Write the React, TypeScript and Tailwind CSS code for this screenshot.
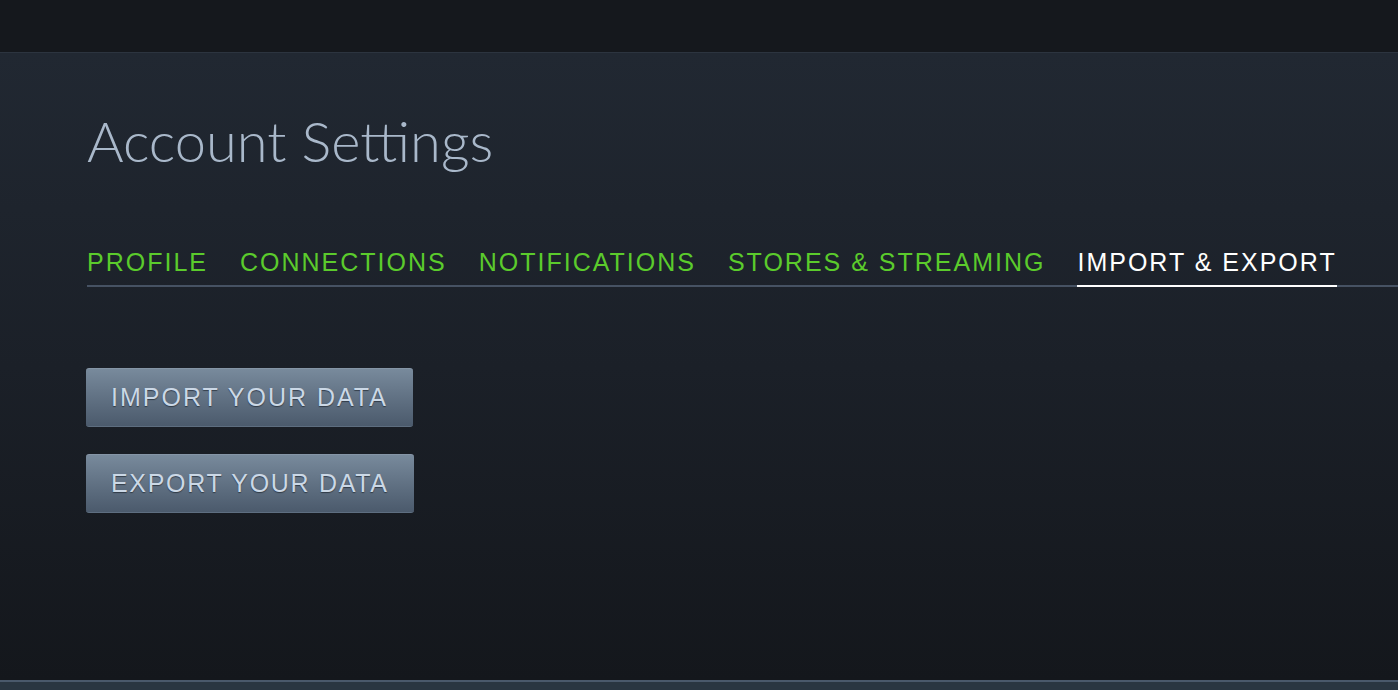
export default function App() {
  const tabs = ['PROFILE', 'CONNECTIONS', 'NOTIFICATIONS', 'STORES & STREAMING', 'IMPORT & EXPORT'];
  const active = 'IMPORT & EXPORT';

  return (
    <div className="h-[690px] w-full flex flex-col overflow-hidden bg-[#15181d]">
      {/* Top bar */}
      <div className="h-[52px] shrink-0 bg-[#15181d]" />

      {/* Main panel */}
      <main className="flex-1 border-t border-[#2c343f] bg-gradient-to-b from-[#212832] via-[#1b2028] to-[#14171c] pl-[87px] pt-[60px]">
        <h1 className="font-['Lato','Liberation_Sans',sans-serif] font-light text-[56px] leading-none text-[#a9b8ca]">
          Account Settings
        </h1>

        {/* Tabs */}
        <nav className="mt-[81px] flex gap-[32px] border-b-2 border-[#465263] font-['Liberation_Sans',Arial,sans-serif]">
          {tabs.map((t) => (
            <div
              key={t}
              className={
                t === active
                  ? 'text-[25px] leading-none tracking-[2px] pb-[10px] -mb-[2px] border-b-2 border-white text-white whitespace-nowrap'
                  : 'text-[25px] leading-none tracking-[2px] pb-[10px] text-[#5bcb2c] whitespace-nowrap'
              }
            >
              {t}
            </div>
          ))}
        </nav>

        {/* Buttons */}
        <div className="mt-[81px] flex flex-col items-start gap-[27px] font-['Liberation_Sans',Arial,sans-serif]">
          <button className="h-[59px] -ml-px px-[25px] flex items-center rounded-[3px] border-t border-[#8595a6] border-b border-b-[#5e6e80] bg-gradient-to-b from-[#788a9c] to-[#4b5a6c] text-[25px] leading-none tracking-[2px] text-[#cbd8e6] [text-shadow:0_1px_1px_rgba(20,26,34,0.6)]">
            IMPORT YOUR DATA
          </button>
          <button className="h-[59px] -ml-px px-[25px] flex items-center rounded-[3px] border-t border-[#8595a6] border-b border-b-[#5e6e80] bg-gradient-to-b from-[#788a9c] to-[#4b5a6c] text-[25px] leading-none tracking-[1.7px] text-[#cbd8e6] [text-shadow:0_1px_1px_rgba(20,26,34,0.6)]">
            EXPORT YOUR DATA
          </button>
        </div>
      </main>

      {/* Bottom strip */}
      <div className="h-[10px] shrink-0 border-t-2 border-[#4a596b] bg-[#2a3641]" />
    </div>
  );
}
